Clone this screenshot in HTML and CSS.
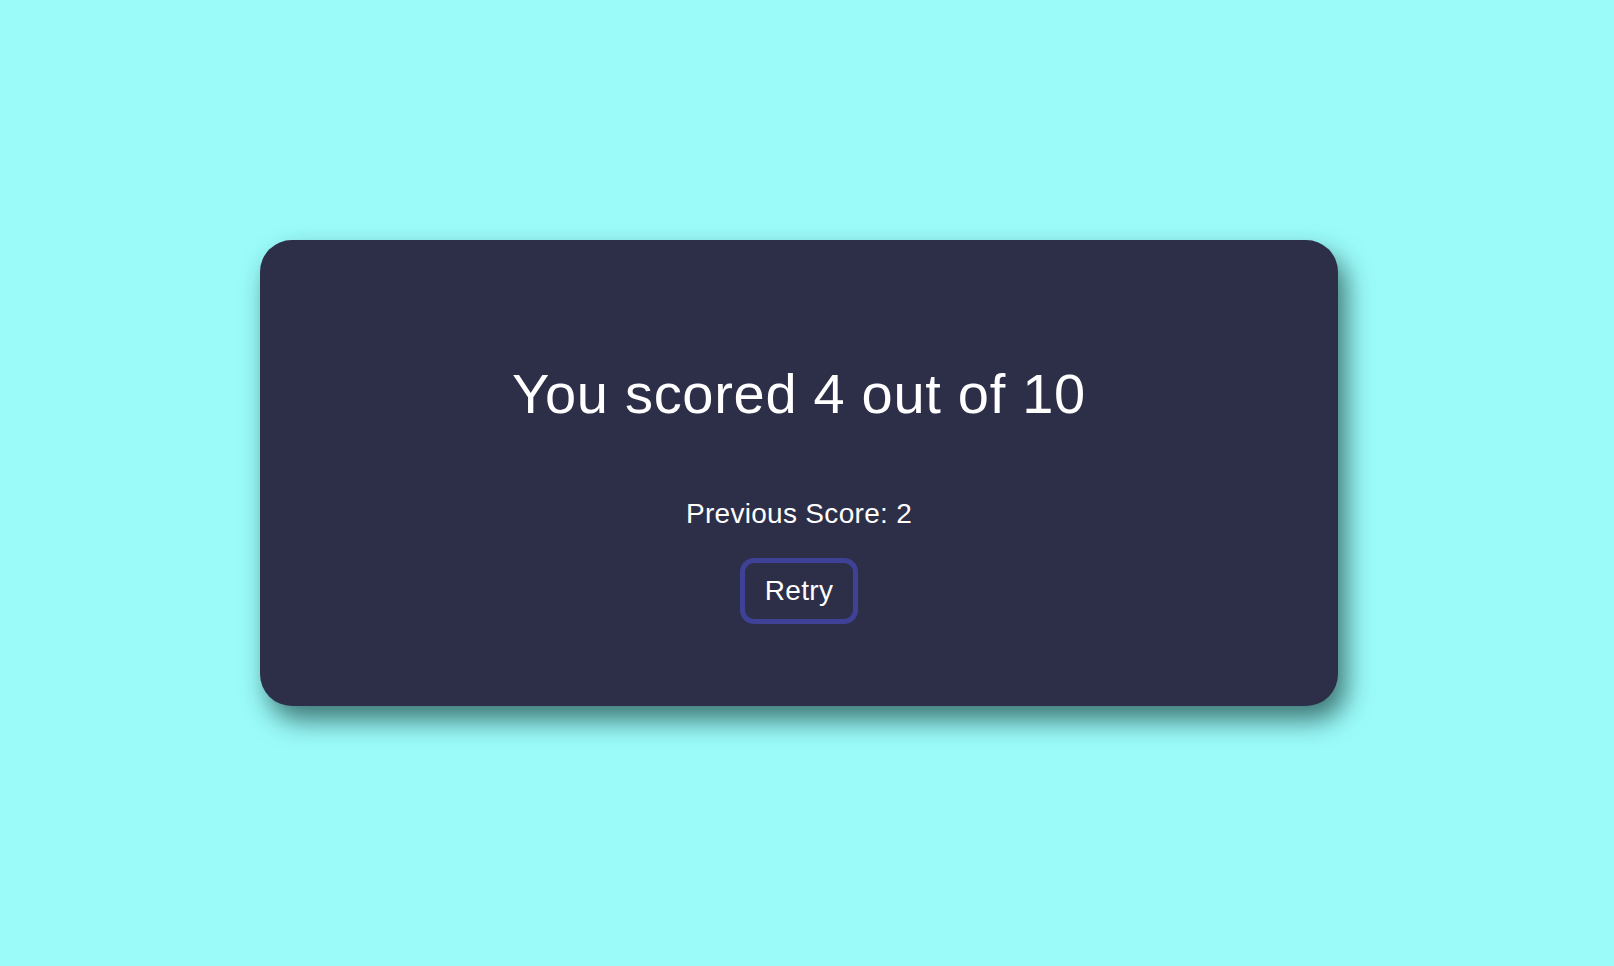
FILE: index.html
```html
<!DOCTYPE html>
<html lang="en">
<head>
<meta charset="utf-8">
<title>Quiz Result</title>
<link rel="stylesheet" href="styles.css">
</head>
<body>
<div class="page">
  <div class="card">
    <h1 class="score">You scored 4 out of 10</h1>
    <p class="previous">Previous Score: 2</p>
    <button class="retry" type="button">Retry</button>
  </div>
</div>
</body>
</html>
```

FILE: styles.css
```css
html, body {
  margin: 0;
  padding: 0;
}

body {
  background: #9afbf9;
  font-family: "Liberation Sans", Arial, Helvetica, sans-serif;
  color: #ffffff;
  min-height: 966px;
}

.page {
  padding: 240px 0 0 260px;
}

.card {
  box-sizing: border-box;
  width: 1078px;
  height: 466px;
  background: #2d2e48;
  border-radius: 32px;
  box-shadow: 8px 14px 26px rgba(0, 30, 30, 0.6);
  display: flex;
  flex-direction: column;
  align-items: center;
  padding-top: 121px;
}

.score {
  margin: 0;
  font-size: 56px;
  font-weight: 400;
  line-height: normal;
  letter-spacing: 0.7px;
}

.previous {
  margin: 72px 0 0;
  font-size: 28px;
  line-height: normal;
  letter-spacing: 0.3px;
}

.retry {
  margin-top: 28px;
  font-family: inherit;
  font-size: 28px;
  line-height: normal;
  letter-spacing: 0.3px;
  color: #ffffff;
  background: transparent;
  border: 5.5px solid #3e4196;
  border-radius: 14px;
  padding: 12px 20px;
  cursor: pointer;
}
```
